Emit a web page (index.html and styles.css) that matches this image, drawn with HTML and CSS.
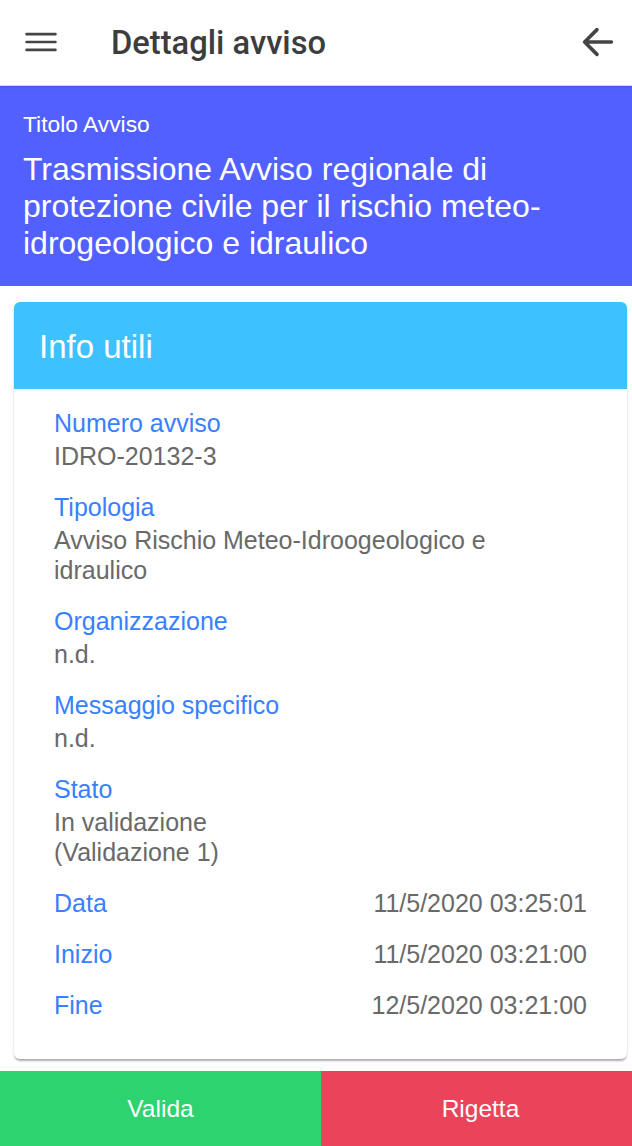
FILE: index.html
```html
<!DOCTYPE html>
<html lang="it">
<head>
<meta charset="utf-8">
<title>Dettagli avviso</title>
<link rel="stylesheet" href="styles.css">
</head>
<body>
<header class="toolbar">
  <button class="icon-btn menu-btn" aria-label="Menu">
    <svg viewBox="0 0 512 512" width="42" height="42"><path fill="none" stroke="#444" stroke-linecap="round" stroke-miterlimit="10" stroke-width="32" d="M80 160h352M80 256h352M80 352h352"/></svg>
  </button>
  <h1 class="toolbar-title">Dettagli avviso</h1>
  <button class="icon-btn back-btn" aria-label="Indietro">
    <svg viewBox="0 0 512 512" width="44" height="44"><path fill="none" stroke="#444" stroke-linecap="round" stroke-linejoin="round" stroke-width="42" d="M244 400L100 256l144-144M120 256h292"/></svg>
  </button>
</header>

<section class="banner">
  <div class="banner-label">Titolo Avviso</div>
  <div class="banner-title">Trasmissione Avviso regionale di protezione civile per il rischio meteo-idrogeologico e idraulico</div>
</section>

<section class="card">
  <div class="card-header">Info utili</div>
  <div class="card-body">
    <div class="field">
      <div class="label">Numero avviso</div>
      <div class="value">IDRO-20132-3</div>
    </div>
    <div class="field">
      <div class="label">Tipologia</div>
      <div class="value">Avviso Rischio Meteo-Idroogeologico e idraulico</div>
    </div>
    <div class="field">
      <div class="label">Organizzazione</div>
      <div class="value">n.d.</div>
    </div>
    <div class="field">
      <div class="label">Messaggio specifico</div>
      <div class="value">n.d.</div>
    </div>
    <div class="field">
      <div class="label">Stato</div>
      <div class="value">In validazione<br>(Validazione 1)</div>
    </div>
    <div class="rows">
      <div class="row"><span class="label">Data</span><span class="value">11/5/2020 03:25:01</span></div>
      <div class="row"><span class="label">Inizio</span><span class="value">11/5/2020 03:21:00</span></div>
      <div class="row"><span class="label">Fine</span><span class="value">12/5/2020 03:21:00</span></div>
    </div>
  </div>
</section>

<footer class="actions">
  <button class="action action-ok">Valida</button>
  <button class="action action-ko">Rigetta</button>
</footer>
</body>
</html>
```

FILE: styles.css
```css
* { box-sizing: border-box; }

html, body {
  margin: 0;
  padding: 0;
  background: #ffffff;
  font-family: "Liberation Sans", Arial, Helvetica, sans-serif;
}

body {
  width: 632px;
  height: 1146px;
  overflow: hidden;
}

.toolbar {
  height: 86px;
  display: flex;
  align-items: center;
  background: #ffffff;
  border-bottom: 1px solid #d6d6d6;
  box-shadow: 0 1px 3px rgba(0, 0, 0, 0.12);
  position: relative;
  z-index: 2;
}

.icon-btn {
  background: none;
  border: 0;
  padding: 0;
  display: flex;
  align-items: center;
  justify-content: center;
}

.menu-btn {
  margin-left: 20px;
  margin-top: -2px;
}

.toolbar-title {
  margin: 0 0 0 49px;
  flex: 1;
  font-family: Roboto, "Liberation Sans", Arial, sans-serif;
  font-size: 32.7px;
  font-weight: 500;
  color: #3d3d3d;
  letter-spacing: 0;
}

.back-btn {
  margin-right: 12px;
  margin-top: -2px;
}

.banner {
  background: #5260ff;
  color: #ffffff;
  padding: 24px 23px 24px 23px;
}

.banner-label {
  font-size: 22.8px;
  line-height: 28px;
}

.banner-title {
  margin-top: 13px;
  font-size: 32px;
  line-height: 37px;
}

.card {
  margin: 16px 5px 0 14px;
  border-radius: 6px;
  overflow: hidden;
  background: #ffffff;
  box-shadow: 0 3px 2px -1px rgba(0, 0, 0, 0.25), 0 1px 3px rgba(0, 0, 0, 0.16);
}

.card-header {
  height: 87px;
  display: flex;
  align-items: center;
  padding: 3px 25px 0 25px;
  background: #3dc2ff;
  color: #ffffff;
  font-size: 33px;
}

.card-body {
  padding: 19px 40px 39px 40px;
}

.field {
  padding-right: 20px;
  margin-bottom: 21px;
}

.label {
  color: #3880ff;
  font-size: 25px;
  line-height: 30px;
}

.value {
  color: #696969;
  font-size: 25px;
  line-height: 30px;
}

.field .value {
  margin-top: 3px;
}

.rows {
  display: flex;
  flex-direction: column;
  gap: 21px;
}

.row {
  display: flex;
  justify-content: space-between;
  align-items: center;
}

.actions {
  margin-top: 12px;
  display: flex;
  height: 76px;
}

.action {
  border: 0;
  margin: 0;
  color: #ffffff;
  font-family: "Liberation Sans", Arial, Helvetica, sans-serif;
  font-size: 24.5px;
  display: flex;
  align-items: center;
  justify-content: center;
  padding-bottom: 2px;
}

.action-ok {
  width: 321px;
  background: #2dd36f;
}

.action-ko {
  flex: 1;
  padding-left: 14px;
  background: #eb445a;
}
```
